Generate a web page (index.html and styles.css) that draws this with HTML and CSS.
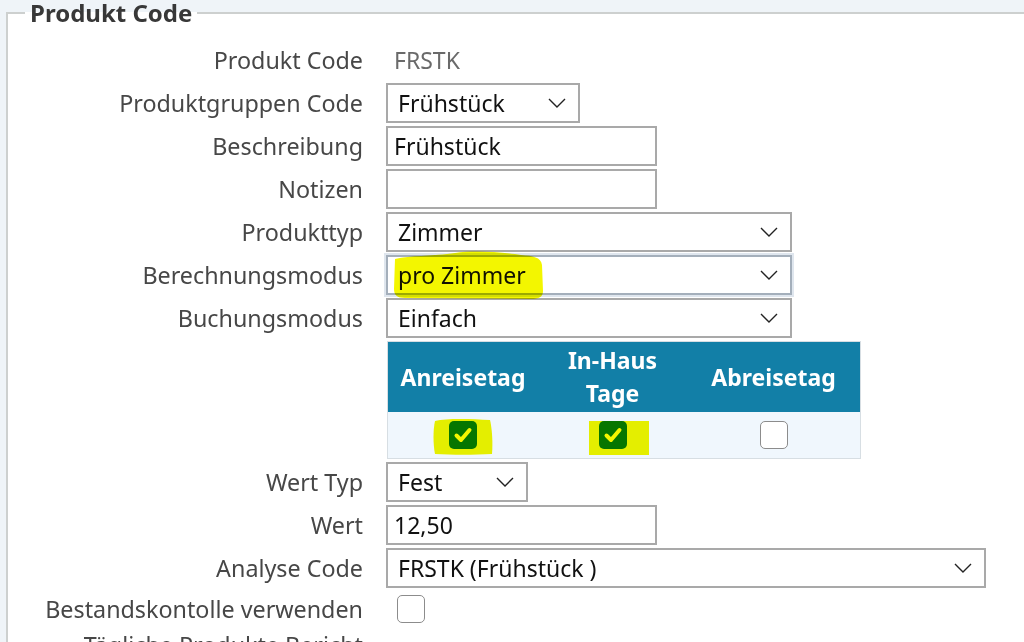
FILE: index.html
```html
<!DOCTYPE html>
<html lang="de">
<head>
    <meta charset="UTF-8">
    <title>Produkt Code</title>
    <link rel="stylesheet" href="styles.css">
</head>
<body>

<fieldset class="panel">
    <legend>Produkt Code</legend>

    <div class="form">
        <label>Produkt Code</label>
        <div class="value">FRSTK</div>

        <label>Produktgruppen Code</label>
        <div class="select w-194"><span>Frühstück</span>
            <svg class="chev" width="18" height="10" viewBox="0 0 18 10"><path d="M1 1 L9 9 L17 1" /></svg>
        </div>

        <label>Beschreibung</label>
        <input class="text w-271" type="text" value="Frühstück">

        <label>Notizen</label>
        <input class="text w-271" type="text" value="">

        <label>Produkttyp</label>
        <div class="select w-406"><span>Zimmer</span>
            <svg class="chev" width="18" height="10" viewBox="0 0 18 10"><path d="M1 1 L9 9 L17 1" /></svg>
        </div>

        <label>Berechnungsmodus</label>
        <div class="select w-406 focused"><span>pro Zimmer</span>
            <svg class="chev" width="18" height="10" viewBox="0 0 18 10"><path d="M1 1 L9 9 L17 1" /></svg>
            <svg class="mark mark-text" width="152" height="50" viewBox="0 0 152 50">
                <path d="M2 8 C20 4 45 5 62 2 C80 -1 110 1 128 4 C140 5 148 6 149 14 L150 40 C150 46 146 48 138 48 L12 47 C4 47 1 44 1 38 Z" />
            </svg>
        </div>

        <label>Buchungsmodus</label>
        <div class="select w-406"><span>Einfach</span>
            <svg class="chev" width="18" height="10" viewBox="0 0 18 10"><path d="M1 1 L9 9 L17 1" /></svg>
        </div>

        <div></div>
        <table class="days">
            <thead>
                <tr>
                    <th class="c1">Anreisetag</th>
                    <th class="c2">In-Haus<br>Tage</th>
                    <th class="c3">Abreisetag</th>
                </tr>
            </thead>
            <tbody>
                <tr>
                    <td>
                        <span class="cb-wrap">
                            <span class="cb checked"><svg width="28" height="28" viewBox="0 0 28 28"><path d="M7.5 14.5 L12 19 L20.5 9" /></svg></span>
                            <svg class="mark mark-cb1" width="62" height="38" viewBox="0 0 62 38"><path d="M3 3 C15 0 40 1 58 2 C60 10 61 25 60 36 C42 37 20 37 3 36 C1 26 1 12 3 3 Z" /></svg>
                        </span>
                    </td>
                    <td>
                        <span class="cb-wrap">
                            <span class="cb checked"><svg width="28" height="28" viewBox="0 0 28 28"><path d="M7.5 14.5 L12 19 L20.5 9" /></svg></span>
                            <svg class="mark mark-cb2" width="62" height="36" viewBox="0 0 62 36"><path d="M1 1 L61 1 L61 35 L1 35 Z" /></svg>
                        </span>
                    </td>
                    <td>
                        <span class="cb"></span>
                    </td>
                </tr>
            </tbody>
        </table>

        <label>Wert Typ</label>
        <div class="select w-142"><span>Fest</span>
            <svg class="chev" width="18" height="10" viewBox="0 0 18 10"><path d="M1 1 L9 9 L17 1" /></svg>
        </div>

        <label>Wert</label>
        <input class="text w-271" type="text" value="12,50">

        <label>Analyse Code</label>
        <div class="select w-600"><span>FRSTK (Frühstück )</span>
            <svg class="chev" width="18" height="10" viewBox="0 0 18 10"><path d="M1 1 L9 9 L17 1" /></svg>
        </div>

        <label>Bestandskontolle verwenden</label>
        <div class="check-cell"><span class="cb"></span></div>

        <label class="last">Tägliche Produkte Bericht</label>
        <div></div>
    </div>
</fieldset>

</body>
</html>
```

FILE: styles.css
```css
body {
    margin: 0;
    background-color: #eff4f8;
    font-family: "Noto Sans", "Open Sans", sans-serif;
    overflow: hidden;
    height: 642px;
}
.panel {
    margin: 0 -40px 0 6px;
    padding: 0 0 60px 0;
    border: 2px solid #cdd0cf;
    background-color: #fff;
    min-height: 700px;
}
.panel legend {
    margin-left: 17px;
    padding: 0 5px;
    font-size: 24px;
    line-height: 26px;
    font-weight: bold;
    color: #383838;
}
.form {
    display: grid;
    grid-template-columns: 355px 1fr;
    column-gap: 23px;
    row-gap: 3px;
    padding-top: 14px;
    align-items: center;
}
.form label {
    text-align: right;
    font-size: 23.3px;
    color: #474747;
    white-space: nowrap;
}
.form label.last {
    line-height: 30px;
}
.value {
    height: 40px;
    line-height: 40px;
    padding-left: 8px;
    font-size: 23px;
    color: #6a6a6a;
}
.select, .text {
    box-sizing: border-box;
    height: 40px;
    border: 2px solid #a9a9a9;
    background-color: #fff;
    font-family: inherit;
    font-size: 23px;
    color: #111;
}
.select {
    position: relative;
    display: flex;
    align-items: center;
    justify-content: space-between;
    padding: 0 12px 0 10px;
}
.select span {
    position: relative;
    z-index: 1;
}
.select.focused {
    border-color: #a4afbb;
    box-shadow: 0 0 0 2px #dfe6ee;
}
.text {
    padding: 0 6px;
    outline: none;
}
.chev {
    fill: none;
    stroke: #222;
    stroke-width: 1.4;
}
.w-142 { width: 142px; }
.w-194 { width: 194px; }
.w-271 { width: 271px; }
.w-406 { width: 406px; }
.w-600 { width: 600px; }

.mark {
    position: absolute;
    z-index: 2;
    fill: #f3f600;
    mix-blend-mode: multiply;
    pointer-events: none;
}
.mark-text {
    left: 5px;
    top: -6px;
}

.days {
    width: 474px;
    margin-left: 1px;
    border-collapse: collapse;
    border: 1px solid #d7dee3;
}
.days th {
    height: 70px;
    padding: 0;
    background-color: #127fa7;
    color: #fff;
    font-size: 23px;
    font-weight: bold;
    line-height: 33px;
}
.days .c1 { width: 150px; }
.days .c2 { width: 149px; }
.days td {
    height: 46px;
    padding: 0;
    background-color: #f0f7fd;
    text-align: center;
    vertical-align: middle;
}
.cb-wrap {
    position: relative;
    display: inline-block;
    vertical-align: middle;
}
.cb {
    box-sizing: border-box;
    display: inline-block;
    width: 28px;
    height: 28px;
    border: 1.5px solid #8c8c8c;
    border-radius: 5px;
    background-color: #fff;
    vertical-align: middle;
}
.cb.checked {
    border: none;
    background-color: #067a06;
}
.cb svg {
    display: block;
    fill: none;
    stroke: #fff;
    stroke-width: 4;
    stroke-linecap: round;
    stroke-linejoin: round;
}
.mark-cb1 {
    left: -17px;
    top: -3px;
}
.mark-cb2 {
    left: -11px;
    top: -1px;
}
.check-cell {
    height: 36px;
    display: flex;
    align-items: center;
    padding-left: 11px;
}
```
